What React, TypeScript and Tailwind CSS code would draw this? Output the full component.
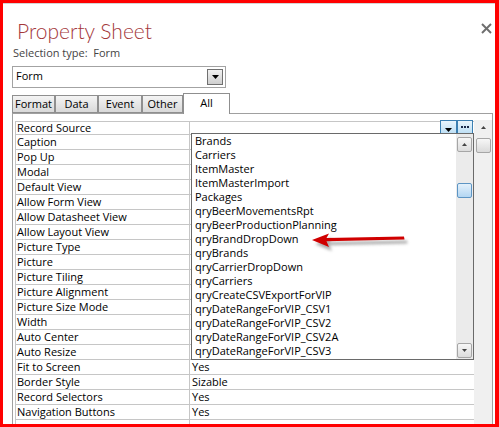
import React from "react";

const labels: [string, string][] = [
  ["Record Source", ""],
  ["Caption", ""],
  ["Pop Up", ""],
  ["Modal", ""],
  ["Default View", ""],
  ["Allow Form View", ""],
  ["Allow Datasheet View", ""],
  ["Allow Layout View", ""],
  ["Picture Type", ""],
  ["Picture", ""],
  ["Picture Tiling", ""],
  ["Picture Alignment", ""],
  ["Picture Size Mode", ""],
  ["Width", ""],
  ["Auto Center", ""],
  ["Auto Resize", ""],
  ["Fit to Screen", "Yes"],
  ["Border Style", "Sizable"],
  ["Record Selectors", "Yes"],
  ["Navigation Buttons", "Yes"],
  ["", ""],
];

const items = [
  "Brands",
  "Carriers",
  "ItemMaster",
  "ItemMasterImport",
  "Packages",
  "qryBeerMovementsRpt",
  "qryBeerProductionPlanning",
  "qryBrandDropDown",
  "qryBrands",
  "qryCarrierDropDown",
  "qryCarriers",
  "qryCreateCSVExportForVIP",
  "qryDateRangeForVIP_CSV1",
  "qryDateRangeForVIP_CSV2",
  "qryDateRangeForVIP_CSV2A",
  "qryDateRangeForVIP_CSV3",
];

function TriDown({ w = 7, h = 4, color = "#000" }: { w?: number; h?: number; color?: string }) {
  return (
    <svg width={w} height={h} viewBox={`0 0 ${w} ${h}`}>
      <polygon points={`0,0 ${w},0 ${w / 2},${h}`} fill={color} />
    </svg>
  );
}

function TriUp({ w = 5, h = 3, color = "#444" }: { w?: number; h?: number; color?: string }) {
  return (
    <svg width={w} height={h} viewBox={`0 0 ${w} ${h}`}>
      <polygon points={`0,${h} ${w},${h} ${w / 2},0`} fill={color} />
    </svg>
  );
}

function Tab({ label, w }: { label: string; w: string }) {
  return (
    <div
      className={`${w} h-[18px] border border-[#8f8f8f] bg-gradient-to-b from-[#f4f4f4] to-[#d9d9d9] flex justify-center leading-[15px] text-[11px] text-black`}
    >
      {label}
    </div>
  );
}

export default function App() {
  return (
    <div
      className="relative w-[499px] h-[427px] overflow-hidden bg-white border-solid border-[#ff0000] border-t-[3px] border-l-[3px] border-r-[4px] border-b-[3px]"
      style={{ fontFamily: '"Open Sans", "Noto Sans", sans-serif' }}
    >
      <div className="h-full border-t border-[#d4d4d4] flex flex-col pl-[9px] pr-[2px]">
        {/* header */}
        <div className="mt-[14px] flex justify-between items-start">
          <div
            className="ml-[5px] text-[21px] leading-[25px] font-light text-[#a4373a]"
            style={{ fontFamily: 'Lato, "Open Sans", sans-serif' }}
          >
            Property Sheet
          </div>
          <svg width="11" height="11" viewBox="0 0 11 11" className="mt-[5px] mr-[1px]">
            <line x1="1" y1="1" x2="10" y2="10" stroke="#6e6e6e" strokeWidth="2" />
            <line x1="10" y1="1" x2="1" y2="10" stroke="#6e6e6e" strokeWidth="2" />
          </svg>
        </div>
        <div className="mt-[2px] ml-[1px] text-[11px] leading-[15px] text-[#444] whitespace-pre">
          Selection type:  Form
        </div>
        {/* combobox */}
        <div className="mt-[6px] w-[214px] h-[22px] border border-[#a3a3a3] flex justify-between items-start">
          <div className="pl-[3px] pt-[1px] text-[11px] leading-[15px] text-black">Form</div>
          <div className="mt-[2px] mr-[2px] w-[16px] h-[16px] border border-[#707070] bg-gradient-to-b from-[#f2f2f2] to-[#cfcfcf] flex items-center justify-center">
            <TriDown w={7} h={4} />
          </div>
        </div>
        {/* tabs */}
        <div className="mt-[5px] h-[20px] flex items-end">
          <Tab label="Format" w="w-[43px]" />
          <Tab label="Data" w="w-[43px]" />
          <Tab label="Event" w="w-[44px]" />
          <Tab label="Other" w="w-[41px]" />
          <div className="relative z-10 w-[47px] h-[21px] -mb-px bg-white border border-b-0 border-[#8f8f8f] flex justify-center pt-[1px] text-[11px] leading-[15px] text-black">
            All
          </div>
        </div>
        {/* panel */}
        <div className="flex-1 min-h-0 border-l border-t border-r border-[#a0a0a0] pt-[6px] pl-[2px] flex">
          <div className="relative mt-[1px] w-[459px] border-t border-l border-[#c6c6c6] text-[11px] text-black">
            {labels.map(([l, v], i) => (
              <div
                key={i}
                className={`flex border-b border-[#c6c6c6] ${i === 0 ? "h-[13px]" : "h-[15px]"}`}
              >
                <div
                  className={`w-[174px] shrink-0 border-r border-[#c6c6c6] pl-[1px] whitespace-nowrap ${
                    i === 0 ? "leading-[12px]" : "leading-[14px]"
                  }`}
                >
                  {l}
                </div>
                <div className="flex-1 pl-[2px] leading-[14px] whitespace-nowrap flex justify-between">
                  <span>{v}</span>
                  {i === 0 && (
                    <div className="relative z-10 -mt-[2px] mr-[1px] h-[14px] flex">
                      <div className="w-[17px] h-[14px] border border-[#3c7fb1] bg-gradient-to-b from-[#eaf5fc] to-[#bfe0f5] flex items-end justify-center pb-[1px]">
                        <TriDown w={7} h={4} />
                      </div>
                      <div className="w-[16px] h-[14px] border border-[#3c7fb1] bg-gradient-to-b from-[#eaf5fc] to-[#bfe0f5] flex items-center justify-center gap-[1px]">
                        <div className="w-[2px] h-[2px] bg-[#1b2a4a]" />
                        <div className="w-[2px] h-[2px] bg-[#1b2a4a]" />
                        <div className="w-[2px] h-[2px] bg-[#1b2a4a]" />
                      </div>
                    </div>
                  )}
                </div>
              </div>
            ))}
            {/* dropdown list */}
            <div className="absolute z-20 left-[175px] top-[11px] w-[283px] h-[227px] border border-[#6a6a6a] bg-white flex">
              <div className="flex-1 pl-[3px]">
                {items.map((it) => (
                  <div key={it} className="h-[14px] leading-[14px] whitespace-nowrap">
                    {it}
                  </div>
                ))}
              </div>
              <div className="w-[17px] bg-[#ebebeb] flex flex-col items-center">
                <div className="mt-[3px] w-[15px] h-[15px] rounded-[2px] border border-[#a6a6a6] bg-gradient-to-b from-[#f7f7f7] to-[#dcdcdc] flex items-center justify-center">
                  <TriUp />
                </div>
                <div className="mt-[31px] w-[15px] h-[15px] rounded-[2px] border border-[#5d95c4] bg-gradient-to-b from-[#e4f1fb] to-[#b3d6f2]" />
                <div className="mt-auto mb-[1px] w-[15px] h-[15px] rounded-[2px] border border-[#a6a6a6] bg-gradient-to-b from-[#f7f7f7] to-[#dcdcdc] flex items-center justify-center">
                  <TriDown w={5} h={3} color="#444" />
                </div>
              </div>
            </div>
          </div>
          {/* outer scrollbar */}
          <div className="w-[18px] bg-[#f0f0f0] flex flex-col pl-[2px]">
            <div className="h-[15px] w-[15px] flex items-center justify-center">
              <TriUp />
            </div>
            <div className="mt-[3px] w-[15px] h-[15px] rounded-[2px] border border-[#a6a6a6] bg-gradient-to-b from-[#f7f7f7] to-[#dadada]" />
          </div>
        </div>
      </div>
      {/* red arrow annotation */}
      <svg
        width="105"
        height="25"
        viewBox="0 0 105 25"
        className="absolute left-[305px] top-[225px] z-30 overflow-visible"
      >
        <defs>
          <filter id="blur" x="-20%" y="-50%" width="140%" height="200%">
            <feGaussianBlur stdDeviation="1.5" />
          </filter>
        </defs>
        <path
          d="M4,12 L21,5.5 L18.5,10 L96,8.6 L96.5,11.4 L18.5,13.3 L21,19 Z"
          fill="#8a8a8a"
          opacity="0.7"
          filter="url(#blur)"
          transform="translate(3,4)"
        />
        <path d="M4,12 L21,5.5 L18.5,10 L96,8.6 L96.5,11.4 L18.5,13.3 L21,19 Z" fill="#d00000" />
      </svg>
    </div>
  );
}
